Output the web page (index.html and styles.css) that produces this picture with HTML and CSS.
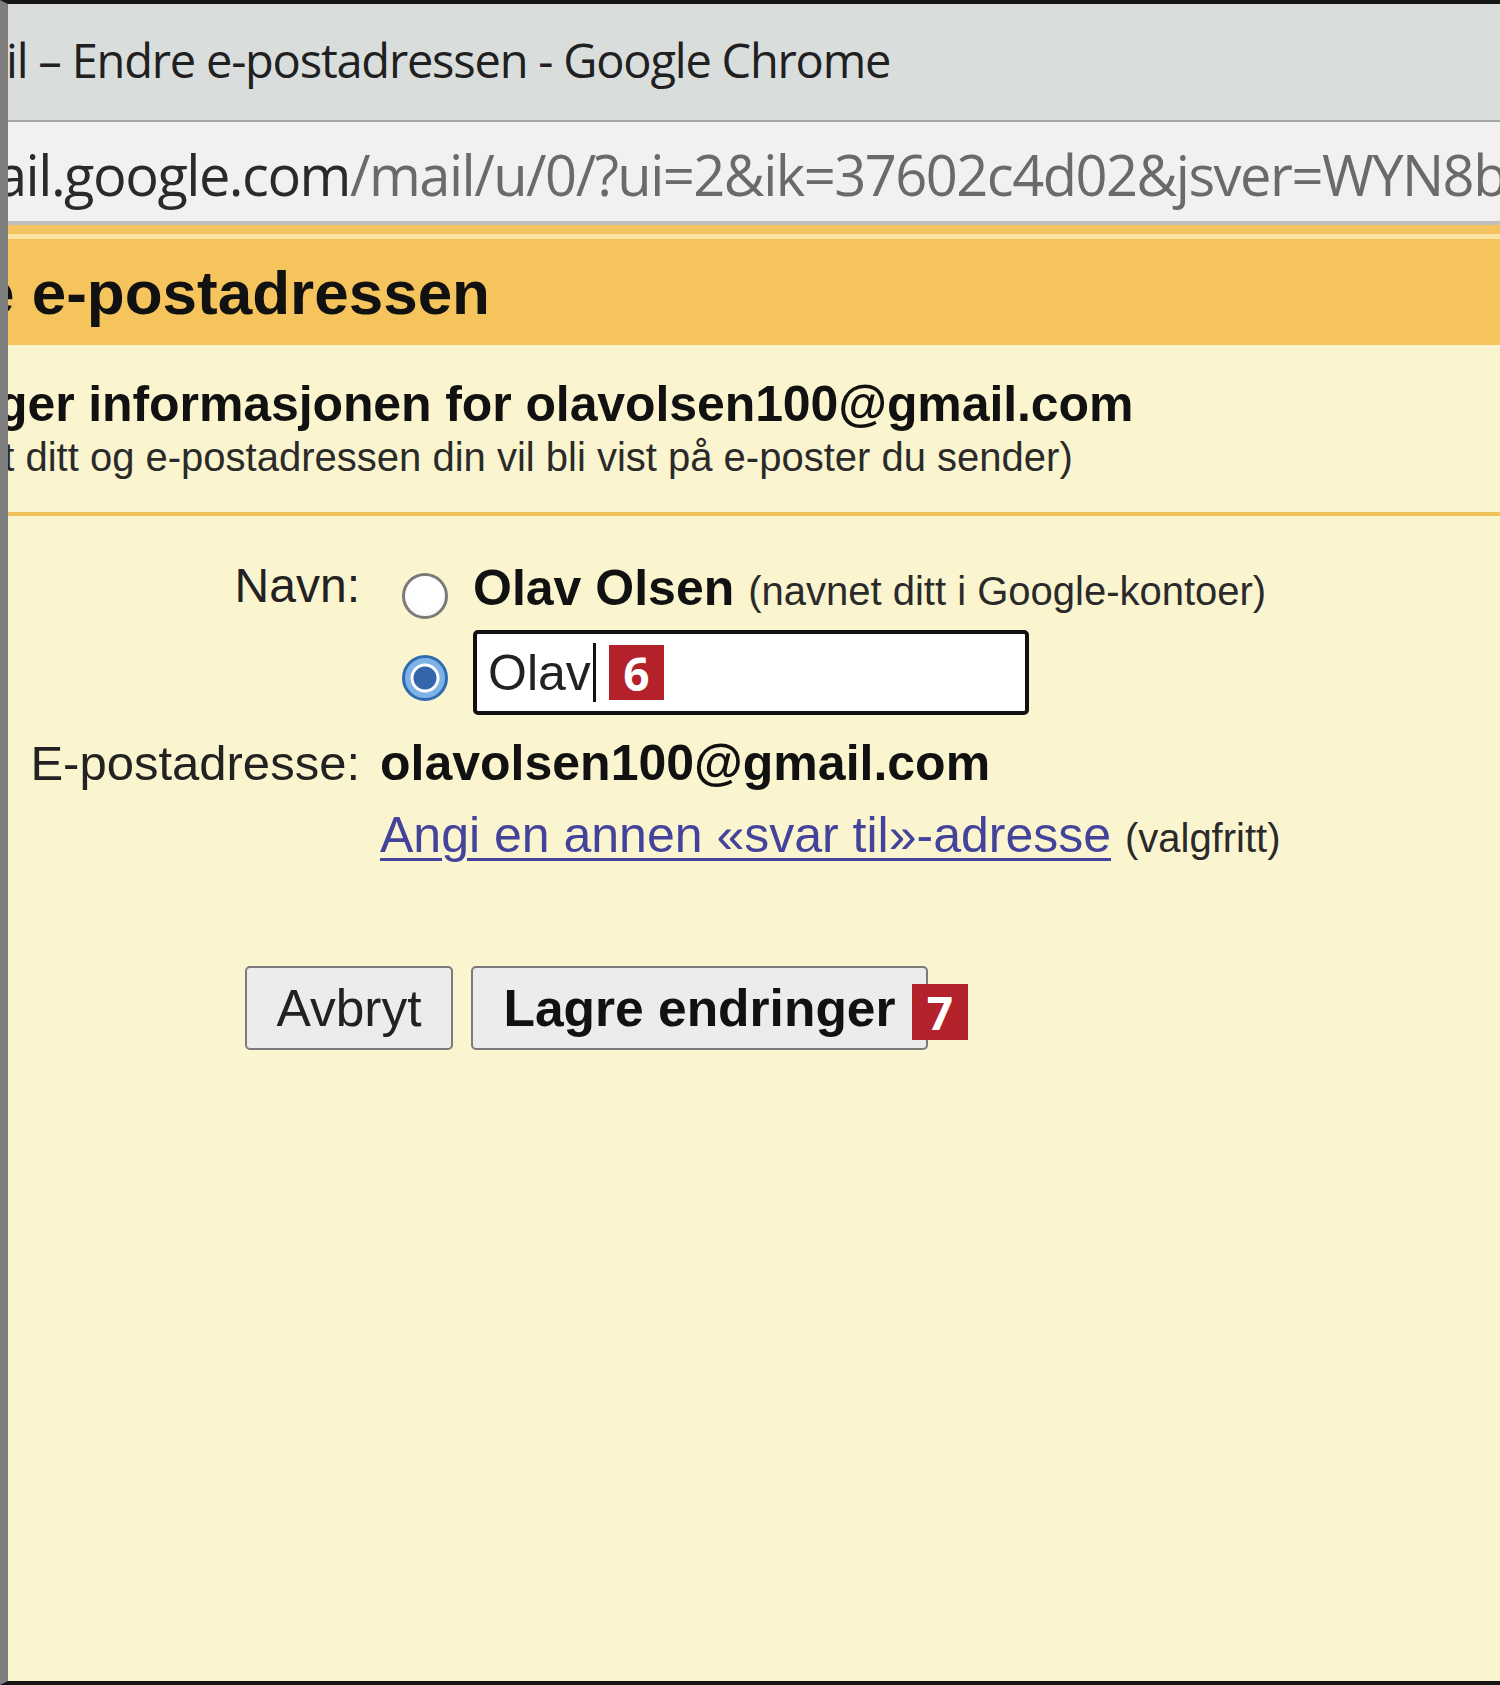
FILE: index.html
```html
<!DOCTYPE html>
<html lang="no">
<head>
    <meta charset="UTF-8">
    <meta name="viewport" content="width=device-width, initial-scale=1.0">
    <link rel="stylesheet" href="styles.css">
</head>
<body>
    <div class="window">
        <div class="titlebar">
            <span class="title">il – Endre e-postadressen - Google Chrome</span>
        </div>
        <div class="addressbar">
            <span class="url"><span class="host">ail.google.com</span>/mail/u/0/?ui=2&amp;ik=37602c4d02&amp;jsver=WYN8b</span>
        </div>
        <div class="accent"></div>

        <div class="page-head">
            <h1 class="page-title">e e-postadressen</h1>
        </div>

        <div class="info">
            <p class="info-main">ger informasjonen for olavolsen100@gmail.com</p>
            <p class="info-sub">et ditt og e-postadressen din vil bli vist på e-poster du sender)</p>
        </div>

        <form class="form">
            <div class="row">
                <span class="field-label label-name">Navn:</span>
                <div class="field">
                    <div class="choice choice-account">
                        <input type="radio" name="navn" class="radio">
                        <span class="choice-text"><b class="strong">Olav Olsen</b> <span class="note">(navnet ditt i Google-kontoer)</span></span>
                    </div>
                    <div class="choice choice-custom">
                        <input type="radio" name="navn" class="radio" checked>
                        <div class="textbox">
                            <span class="textbox-value">Olav</span>
                            <span class="caret"></span>
                            <span class="step step-six">6</span>
                        </div>
                    </div>
                </div>
            </div>

            <div class="row row-email">
                <span class="field-label">E-postadresse:</span>
                <div class="field">
                    <b class="strong email">olavolsen100@gmail.com</b>
                    <div class="reply">
                        <a class="reply-link" href="#">Angi en annen «svar til»-adresse</a>
                        <span class="note">(valgfritt)</span>
                    </div>
                </div>
            </div>

            <div class="actions">
                <button type="button" class="btn btn-cancel">Avbryt</button>
                <button type="button" class="btn btn-save">Lagre endringer</button>
                <span class="step step-seven">7</span>
            </div>
        </form>
    </div>
</body>
</html>
```

FILE: styles.css
```css
* {
    box-sizing: border-box;
}

body {
    margin: 0;
    background: #fbf5cf;
    font-family: "Liberation Sans", Arial, sans-serif;
    color: #1a1a1a;
}

.window {
    height: 1685px;
    display: flex;
    flex-direction: column;
    border-top: 4px solid #161616;
    border-bottom: 4px solid #161616;
    border-left: 8px solid #7f7f7f;
    overflow: hidden;
}

/* barra de titulo de chrome */
.titlebar {
    flex: none;
    height: 118px;
    background: #d9dddc;
    border-bottom: 2px solid #a4a7a7;
    font-family: "Open Sans", sans-serif;
    font-size: 47px;
    line-height: 113px;
    color: #202020;
    white-space: nowrap;
}
.title {
    margin-left: -2px;
    letter-spacing: -1.2px;
}

.addressbar {
    flex: none;
    height: 103px;
    background: #f1f1f1;
    border-bottom: 4px solid #bebebc;
    font-family: "Open Sans", sans-serif;
    font-size: 56px;
    line-height: 104px;
    color: #6a6a6a;
    white-space: nowrap;
    overflow: hidden;
}
.url {
    display: inline-block;
    margin-left: -12px;
    letter-spacing: -1.5px;
}
.host {
    color: #2a2a2a;
}

.accent {
    flex: none;
    height: 16px;
    background: linear-gradient(#f3c35d 0 9px, #fbe4a4 9px 14px, #f5c45c 14px);
}

.page-head {
    flex: none;
    height: 104px;
    background: #f5c45c;
    white-space: nowrap;
}
.page-title {
    margin: 0 0 0 -28px;
    font-size: 62px;
    line-height: 104px;
    font-weight: bold;
    color: #111;
}

.info {
    flex: none;
    padding: 29px 0 32px;
    border-bottom: 4px solid #f0c15a;
    white-space: nowrap;
}
.info p {
    margin: 0;
}
.info-main {
    margin-left: -11px !important;
    font-size: 50px;
    line-height: 60px;
    font-weight: bold;
    letter-spacing: -0.1px;
    color: #111;
}
.info-sub {
    margin-left: -27px !important;
    font-size: 40px;
    line-height: 46px;
    color: #2a2a2a;
}

/* formulario */
.form {
    padding-top: 40px;
}

.row {
    display: flex;
}

.field-label {
    flex: none;
    width: 352px;
    text-align: right;
    font-size: 49px;
    line-height: 70px;
    color: #222;
}
.label-name {
    font-size: 48px;
    line-height: 60px;
}

.field {
    margin-left: 20px;
    white-space: nowrap;
}

.choice {
    display: flex;
    align-items: center;
}
.choice-account {
    height: 74px;
}
.choice-custom {
    height: 85px;
}

.radio {
    appearance: none;
    -webkit-appearance: none;
    flex: none;
    width: 46px;
    height: 46px;
    margin: 0 25px 0 22px;
    border-radius: 50%;
    border: 3px solid #7a7a7a;
    background: radial-gradient(circle at 50% 40%, #ffffff 55%, #eeeeee);
}
.choice-account .radio {
    margin-top: 6px;
}
.choice-custom .radio {
    margin-top: 11px;
    border: 3px solid #2f6bb0;
    background: radial-gradient(circle, #3565aa 0 11px, #ffffff 12px 14px, #7fb2e6 15px);
}

.choice-text {
    margin-bottom: 8px;
    font-size: 50px;
    line-height: 56px;
}

.strong {
    font-size: 50px;
    font-weight: bold;
    color: #111;
}

.note {
    font-size: 40px;
    color: #2a2a2a;
}

.textbox {
    display: flex;
    align-items: center;
    width: 556px;
    height: 85px;
    padding-left: 11px;
    background: #fff;
    border: 4px solid #111;
    border-radius: 5px;
}
.textbox-value {
    font-size: 50px;
    line-height: 56px;
    color: #222;
}
.caret {
    width: 3px;
    height: 59px;
    margin-left: 2px;
    background: #111;
}

.step {
    display: flex;
    align-items: center;
    justify-content: center;
    width: 55px;
    height: 55px;
    background: #b3212b;
    color: #fff;
    font-family: "Open Sans", sans-serif;
    font-weight: bold;
    font-size: 46px;
    line-height: 1;
}
.step-six {
    margin-left: 13px;
}

.row-email {
    margin-top: 13px;
    align-items: baseline;
}
.email {
    line-height: 70px;
}
.reply {
    margin-top: 2px;
    font-size: 50px;
    line-height: 70px;
}
.reply-link {
    color: #43439b;
    text-decoration: underline;
    text-decoration-thickness: 3px;
    text-underline-offset: 6px;
}

.actions {
    display: flex;
    gap: 18px;
    margin: 93px 0 0 237px;
}
.btn {
    height: 84px;
    padding: 0;
    background: #ececec;
    border: 2px solid #7b7b7b;
    border-radius: 5px;
    font-family: "Liberation Sans", Arial, sans-serif;
    font-size: 51.5px;
    line-height: 80px;
    color: #222;
}
.btn-cancel {
    width: 208px;
}
.btn-save {
    width: 457px;
    font-weight: bold;
    color: #111;
}
.step-seven {
    margin: 18px 0 0 -34px;
    width: 56px;
    height: 56px;
}
```
